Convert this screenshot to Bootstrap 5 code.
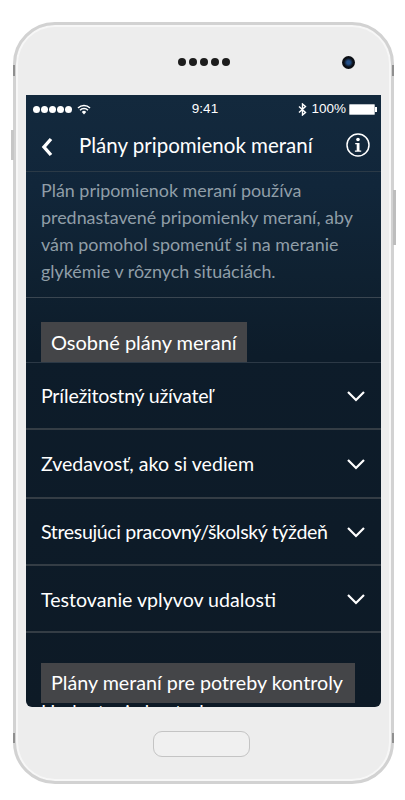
<!DOCTYPE html>
<html lang="sk">
<head>
<meta charset="utf-8">
<title>Plány pripomienok meraní</title>
<link href="https://cdn.jsdelivr.net/npm/bootstrap@5.3.0/dist/css/bootstrap.min.css" rel="stylesheet">
<style>
html,body{height:800px;overflow:hidden;background:#fff;}
body{font-family:"Lato","Liberation Sans",sans-serif;color:#fff;}
.stage{padding:22px 11px 0 13px;}
.shell{position:relative;width:381px;height:762px;background:#ededed;border:3px solid #d2d2d2;border-radius:42px;padding:70px 10px 0 10px;box-shadow:inset 0 0 0 2px #f7f7f7;}
.side-key{position:absolute;width:2px;background:#8f8f8f;}
.k1{left:-3px;top:40px;height:11px;}
.k2{right:-3px;top:40px;height:11px;}
.k3{left:-5px;top:105px;height:30px;width:3px;background:#c6c6c6;}
.k4{right:-5px;top:165px;height:55px;width:3px;background:#bdbdbd;}
.k5{left:-3px;top:708px;height:10px;}
.k6{right:-3px;top:708px;height:10px;}
.speaker{position:absolute;left:162px;top:33px;gap:3px;}
.speaker i{display:block;width:8px;height:8px;border-radius:50%;background:#1c1c1c;}
.cam{position:absolute;left:326px;top:31px;width:13px;height:13px;border-radius:50%;background:radial-gradient(circle at 50% 50%,#24508a 0 18%,#0b0e14 50%);}
.screen{width:355px;height:612px;overflow:hidden;background:linear-gradient(180deg,#13293d 0,#11263a 90px,#0f2131 180px,#0d1c2a 260px,#0d1a26 100%);border-radius:0 0 6px 6px;}
.sbar{height:27px;padding:1px 4px 0 4px;font-size:13.5px;font-family:"Liberation Sans",sans-serif;}
.sbar-side{flex:1 1 0;}
.sbar .sig{gap:1px;padding-left:3px;}
.sbar .sig i{display:block;width:7px;height:7px;border-radius:50%;background:#fff;}
.batt{width:26px;height:11px;background:#fff;border:1px solid #b9c0c6;border-radius:1px;margin-left:3px;}
.batt-tip{width:2px;height:5px;background:#fff;}
.thead{height:50px;padding:0 10px 0 15px;border-bottom:1px solid #2b3a47;}
.thead h1{font-size:20.5px;font-weight:400;margin:0 0 2px 26px;}
.info-ico{margin:0 1px 3px 0;}
.intro{height:126px;padding:5px 15px 0 15px;margin:0;font-size:17.9px;line-height:27px;color:#909ea8;border-bottom:1px solid #3a4651;}
.sect{display:inline-block;background:#444548;font-size:20px;line-height:40px;height:40px;padding:0 10px;margin:24px 0 0 15px;vertical-align:top;}
.sect-line{border-bottom:1px solid #2c3946;}
.rowline{padding:0 15px;font-size:19.6px;border-bottom:2px solid #343d45;}
.tight-a{letter-spacing:-.25px;}
.tight-b{letter-spacing:-.37px;}
.low-text{padding-top:3px;}
.h67{height:67px;}
.h68{height:69px;}
.sect-two{margin-top:30px;font-size:19.7px;padding-right:12px;}
.peek{margin-top:1px;padding:0 15px;font-size:19px;line-height:16px;}
.home{width:97px;height:26px;margin:24px 0 0 127px;border:1px solid #c4c4c4;border-radius:9px;background:#f0f0f0;}
</style>
</head>
<body>
<div class="stage">
<div class="shell">
<span class="side-key k1"></span><span class="side-key k2"></span><span class="side-key k3"></span><span class="side-key k4"></span><span class="side-key k5"></span><span class="side-key k6"></span>
<div class="speaker d-flex"><i></i><i></i><i></i><i></i><i></i></div>
<div class="cam"></div>
<div class="screen">
<div class="sbar d-flex align-items-center">
<div class="sbar-side d-flex align-items-center sig"><i></i><i></i><i></i><i></i><i></i>
<svg width="14" height="11" viewBox="0 0 14 11" class="ms-1"><path d="M1 4a8.5 8.5 0 0 1 12 0M3 6.200a5.500 5.500 0 0 1 8 0" fill="none" stroke="#fff" stroke-width="1.500"/><path d="M4.800 8a3 3 0 0 1 4.400 0L7 10.600z" fill="#fff"/></svg></div>
<span>9:41</span>
<div class="sbar-side d-flex align-items-center justify-content-end">
<svg width="9" height="13" viewBox="0 0 9 13" class="me-1"><path d="M1 3.500l6.500 6L4.500 12V1l3 2.500L1 9.500" fill="none" stroke="#fff" stroke-width="1.400"/></svg>
<span>100%</span><span class="batt"></span><span class="batt-tip"></span></div>
</div>
<div class="thead d-flex align-items-center">
<svg width="12" height="20" viewBox="0 0 12 20"><path d="M10 2L3 10l7 8" fill="none" stroke="#fff" stroke-width="3.400"/></svg>
<h1 class="flex-grow-1">Plány pripomienok meraní</h1>
<svg class="info-ico" width="24" height="24" viewBox="0 0 24 24"><circle cx="12" cy="12" r="11" fill="none" stroke="#fff" stroke-width="1.500"/><circle cx="12" cy="6.500" r="1.800" fill="#fff"/><path d="M9.200 10h4.300v7.500h1.700v1.300H8.900v-1.300h1.800v-6.200H9.200z" fill="#fff"/></svg>
</div>
<p class="intro">Plán pripomienok meraní používa prednastavené pripomienky meraní, aby vám pomohol spomenúť si na meranie glykémie v rôznych situáciách.</p>
<div class="sect-line"><span class="sect">Osobné plány meraní</span></div>
<div class="rowline h67 d-flex align-items-center justify-content-between"><span class="tight-a">Príležitostný užívateľ</span><svg width="20" height="12" viewBox="0 0 20 12"><path d="M2 2l8 8 8-8" fill="none" stroke="#fff" stroke-width="2.200"/></svg></div>
<div class="rowline h68 d-flex align-items-center justify-content-between"><span>Zvedavosť, ako si vediem</span><svg width="20" height="12" viewBox="0 0 20 12"><path d="M2 2l8 8 8-8" fill="none" stroke="#fff" stroke-width="2.200"/></svg></div>
<div class="rowline h67 d-flex align-items-center justify-content-between"><span class="tight-b">Stresujúci pracovný/školský týždeň</span><svg width="20" height="12" viewBox="0 0 20 12"><path d="M2 2l8 8 8-8" fill="none" stroke="#fff" stroke-width="2.200"/></svg></div>
<div class="rowline h67 d-flex align-items-center justify-content-between"><span class="low-text">Testovanie vplyvov udalosti</span><svg width="20" height="12" viewBox="0 0 20 12"><path d="M2 2l8 8 8-8" fill="none" stroke="#fff" stroke-width="2.200"/></svg></div>
<div><span class="sect sect-two">Plány meraní pre potreby kontroly</span></div>
<div class="peek">Hodnotenie kontroly</div>
</div>
<div class="home"></div>
</div>
</div>
</body>
</html>
